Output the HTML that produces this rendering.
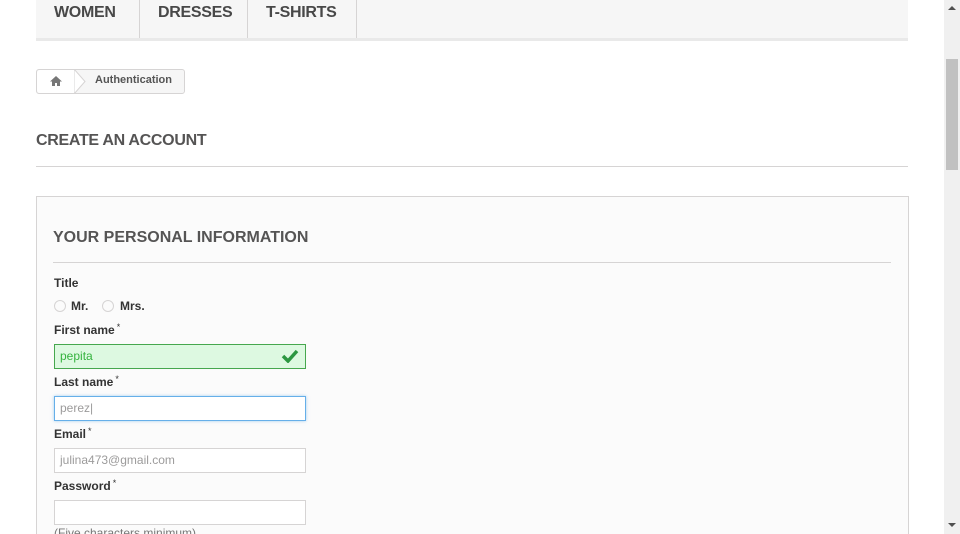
<!DOCTYPE html>
<html><head><style>
*{margin:0;padding:0;box-sizing:border-box}
html,body{width:960px;height:534px;overflow:hidden}
body{background:#fff;font-family:"Liberation Sans",Arial,sans-serif;position:relative}
.a{position:absolute}
.nav{left:36px;top:0;width:872px;height:41px;background:#f6f6f6;border-bottom:3px solid #e9e9e9}
.nav span{position:absolute;top:0;height:38px;line-height:26px;font-size:16px;font-weight:bold;color:#484848;border-right:1px solid #d6d4d4;padding-left:18px;letter-spacing:-0.3px}
.bc{left:36px;top:69px;width:149px;height:25px;border:1px solid #d6d4d4;border-radius:3px;background:#f6f6f6}
.lbl{font-size:12px;font-weight:bold;color:#333;left:54px}
.lbl sup{font-size:9px;font-weight:normal;vertical-align:4px;margin-left:2px}
.inp{left:54px;width:252px;height:25px;border:1px solid #d6d4d4;background:#fff;font-size:12px;color:#9c9b9b;padding-left:5px;line-height:23px}
.r{width:12px;height:12px;border:1px solid #d6d4d4;border-radius:50%;background:#fbfbfb}
</style></head><body>
<div class="a nav">
<span style="left:0;width:104px">WOMEN</span>
<span style="left:104px;width:108px">DRESSES</span>
<span style="left:212px;width:109px">T-SHIRTS</span>
</div>
<div class="a bc">
<div class="a" style="left:0;top:0;width:38px;height:23px;background:#fff;border-radius:3px 0 0 3px"></div>
<svg class="a" style="left:12px;top:5px" width="14" height="12" viewBox="0 0 14 12"><path d="M7 1L1 6.5h2V11h3V8h2v3h3V6.5h2z" fill="#777"/></svg>
<svg class="a" style="left:37px;top:-1px" width="12" height="25" viewBox="0 0 12 25"><path d="M0 0L11 12.5L0 25z" fill="#fff" stroke="#d6d4d4"/></svg>
<span class="a" style="left:58px;top:4px;font-size:11px;font-weight:bold;color:#555">Authentication</span>
</div>
<div class="a" style="left:944px;top:0;width:16px;height:534px;background:#f0f0f0"></div>
<div class="a" style="left:946px;top:59px;width:12px;height:111px;background:#c1c1c1"></div>
<div class="a" style="left:948px;top:6px;width:0;height:0;border:4px solid transparent;border-bottom:4px solid #505050;border-top:0"></div>
<div class="a" style="left:948px;top:523px;width:0;height:0;border:4px solid transparent;border-top:4px solid #505050;border-bottom:0"></div>
<div class="a" style="left:36px;top:132px;font-size:16px;font-weight:bold;color:#555454;letter-spacing:-0.3px">CREATE AN ACCOUNT</div>
<div class="a" style="left:36px;top:166px;width:872px;height:1px;background:#d6d4d4"></div>
<div class="a" style="left:36px;top:196px;width:873px;height:345px;background:#fbfbfb;border:1px solid #d6d4d4"></div>
<div class="a" style="left:53px;top:229px;font-size:16px;font-weight:bold;color:#555454">YOUR PERSONAL INFORMATION</div>
<div class="a" style="left:53px;top:262px;width:838px;height:1px;background:#d6d4d4"></div>
<div class="a lbl" style="top:276px">Title</div>
<div class="a r" style="left:54px;top:300px"></div>
<div class="a lbl" style="left:71px;top:299px">Mr.</div>
<div class="a r" style="left:102px;top:300px"></div>
<div class="a lbl" style="left:120px;top:299px">Mrs.</div>
<div class="a lbl" style="top:322px">First name<sup>*</sup></div>
<div class="a inp" style="top:344px;background:#ddf9e1;border-color:#46a74e;color:#35b33f">pepita</div>
<svg class="a" style="left:281px;top:349px" width="18" height="14" viewBox="0 0 18 14"><path d="M2 7l5 5L16 2" stroke="#2c9741" stroke-width="3.5" fill="none"/></svg>
<div class="a lbl" style="top:374px">Last name<sup>*</sup></div>
<div class="a inp" style="top:396px;border-color:#66afe9;box-shadow:0 0 3px rgba(102,175,233,.6)">perez|</div>
<div class="a lbl" style="top:426px">Email<sup>*</sup></div>
<div class="a inp" style="top:448px">julina473@gmail.com</div>
<div class="a lbl" style="top:478px">Password<sup>*</sup></div>
<div class="a inp" style="top:500px"></div>
<div class="a" style="left:54px;top:526px;font-size:12px;color:#777">(Five characters minimum)</div>
</body></html>
